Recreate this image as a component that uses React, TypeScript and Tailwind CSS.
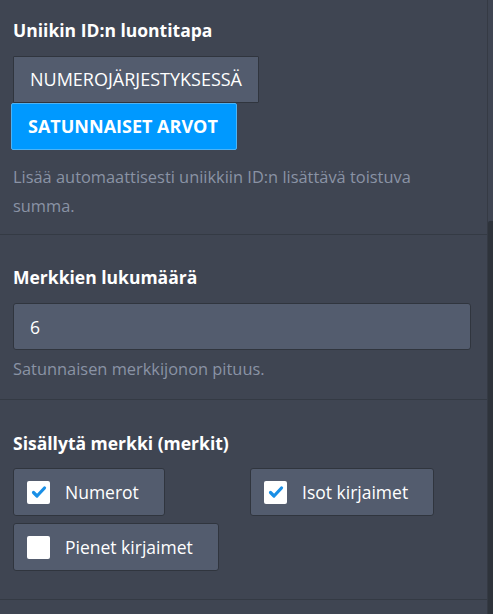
import { useState } from "react";

const font = { fontFamily: '"Open Sans", "Noto Sans", sans-serif' };

function CheckItem({
  label,
  checked,
  onToggle,
}: {
  label: string;
  checked: boolean;
  onToggle: () => void;
}) {
  return (
    <button
      onClick={onToggle}
      className="flex items-center h-[48px] pl-[13px] pr-[25px] bg-[#535c6e] border border-[#30353e] rounded-[3px] justify-self-start"
    >
      <span className="w-[23px] h-[23px] bg-white rounded-[2px] flex items-center justify-center">
        {checked && (
          <svg width="16" height="16" viewBox="0 0 16 16">
            <path
              d="M2.5 8.5 L6 12 L13.5 4"
              fill="none"
              stroke="#1a8fe6"
              strokeWidth="3.2"
              strokeLinecap="round"
              strokeLinejoin="round"
            />
          </svg>
        )}
      </span>
      <span className="ml-[15px] text-[17.5px] text-white">{label}</span>
    </button>
  );
}

export default function App() {
  const [mode, setMode] = useState<"seq" | "rand">("rand");
  const [checks, setChecks] = useState({
    numbers: true,
    upper: true,
    lower: false,
  });

  return (
    <div
      className="w-[493px] h-[614px] overflow-hidden bg-[#3f4552] flex"
      style={font}
    >
      <div className="w-[488px] border-r border-[#353a44]">
        <div className="px-[13px] pt-[18px] pb-[14px] border-b border-[#343a44]">
          <h3 className="text-[17.5px] leading-[24px] font-bold text-white">
            Uniikin ID:n luontitapa
          </h3>
          <div className="mt-[14px] flex flex-col items-start">
            <button
              onClick={() => setMode("seq")}
              className={
                mode === "seq"
                  ? "h-[47px] px-[17px] text-[18px] font-bold text-white bg-[#0099ff] border border-[#4db3f5] rounded-[2px]"
                  : "h-[47px] px-[16px] text-[18px] text-white bg-[#535c6e] border border-[#30353e] rounded-[1px]"
              }
            >
              NUMEROJÄRJESTYKSESSÄ
            </button>
            <button
              onClick={() => setMode("rand")}
              className={
                mode === "rand"
                  ? "-ml-[2px] h-[47px] pl-[16px] pr-[18px] text-[18px] font-bold text-white bg-[#0099ff] border border-[#4db3f5] rounded-[2px]"
                  : "h-[47px] px-[16px] text-[18px] text-white bg-[#535c6e] border border-[#30353e] rounded-[1px]"
              }
            >
              SATUNNAISET ARVOT
            </button>
          </div>
          <p className="mt-[12px] text-[16.4px] leading-[29px] text-[#8a93a5] pr-[40px]">
            Lisää automaattisesti uniikkiin ID:n lisättävä toistuva summa.
          </p>
        </div>

        <div className="px-[13px] pt-[30px] pb-[18px] border-b border-[#343a44]">
          <h3 className="text-[17.5px] leading-[24px] font-bold text-white">
            Merkkien lukumäärä
          </h3>
          <input
            defaultValue="6"
            className="mt-[14px] w-[458px] h-[47px] px-[16px] text-[17.5px] text-white bg-[#535c6e] border border-[#30353e] rounded-[3px] outline-none"
          />
          <p className="mt-[7px] text-[16.4px] leading-[24px] text-[#8a93a5]">
            Satunnaisen merkkijonon pituus.
          </p>
        </div>

        <div className="px-[13px] pt-[31px] pb-[28px] border-b border-[#343a44]">
          <h3 className="text-[17.5px] leading-[24px] font-bold text-white">
            Sisällytä merkki (merkit)
          </h3>
          <div className="mt-[13px] w-[458px] grid grid-cols-2 gap-x-[16px] gap-y-[7px]">
            <CheckItem
              label="Numerot"
              checked={checks.numbers}
              onToggle={() => setChecks({ ...checks, numbers: !checks.numbers })}
            />
            <CheckItem
              label="Isot kirjaimet"
              checked={checks.upper}
              onToggle={() => setChecks({ ...checks, upper: !checks.upper })}
            />
            <CheckItem
              label="Pienet kirjaimet"
              checked={checks.lower}
              onToggle={() => setChecks({ ...checks, lower: !checks.lower })}
            />
          </div>
        </div>
      </div>
      <div className="w-[5px] flex flex-col">
        <div className="h-[221px]" />
        <div className="flex-1 bg-[#2e333b] rounded-tl-[2px]" />
      </div>
    </div>
  );
}
